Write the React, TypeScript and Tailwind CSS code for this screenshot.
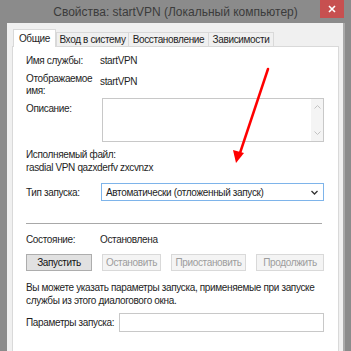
const Row = ({ label, children }: { label: string; children?: React.ReactNode }) => (
  <div className="flex items-center">
    <div className="w-[74px] shrink-0">{label}</div>
    {children}
  </div>
)

const Btn = ({ text, w, enabled }: { text: string; w: string; enabled?: boolean }) => (
  <div
    className={
      (enabled
        ? "border-[#adadad] bg-[#e1e1e1] text-[#111] "
        : "border-[#d9d9d9] bg-[#f4f4f4] text-[#9d9d9d] ") +
      w +
      " h-[17px] flex items-center justify-center border"
    }
  >
    {text}
  </div>
)

export default function App() {
  return (
    <div
      className="relative w-[351px] h-[351px] overflow-hidden bg-[#8b8b8b] flex flex-col text-[10px] tracking-[-0.35px] leading-[13px] text-[#1e1e1e] whitespace-nowrap"
      style={{ fontFamily: '"Liberation Sans", Arial, sans-serif' }}
    >
      {/* title bar */}
      <div className="h-[23px] shrink-0 grid grid-cols-[1fr_auto_1fr] items-start">
        <div />
        <div className="pt-[5px] text-[12px] tracking-normal leading-[15px] text-[#3b3b3b]">
          Свойства: startVPN (Локальный компьютер)
        </div>
        <div className="flex justify-end pr-[7px]">
          <div className="w-[24px] h-[18px] bg-[#c75050] flex items-center justify-center">
            <svg width="8" height="8" viewBox="0 0 8 8">
              <path d="M1 1L7 7M7 1L1 7" stroke="#fff" strokeWidth="1.6" />
            </svg>
          </div>
        </div>
      </div>

      {/* window body */}
      <div className="flex-1 ml-[7px] mr-[6px] border-r-2 border-[#a9a9a9] bg-[#f0f0f0] pl-[5px] pr-[4px] pt-[6px] flex flex-col">
        {/* tabs */}
        <div className="flex items-end h-[17px] pl-[1px]">
          <div className="relative z-10 h-[18px] w-[43px] -mb-px flex items-center justify-center bg-white border border-b-0 border-[#d9d9d9]">
            Общие
          </div>
          <div className="h-[14px] w-[73px] flex items-center justify-center border border-b-0 border-[#d9d9d9] bg-[#f0f0f0]">
            Вход в систему
          </div>
          <div className="h-[14px] w-[80px] flex items-center justify-center border border-b-0 border-l-0 border-[#d9d9d9] bg-[#f0f0f0]">
            Восстановление
          </div>
          <div className="h-[14px] w-[65px] flex items-center justify-center border border-b-0 border-l-0 border-[#d9d9d9] bg-[#f0f0f0]">
            Зависимости
          </div>
        </div>

        {/* panel */}
        <div className="flex-1 bg-white border border-b-0 border-[#d9d9d9] pl-[13px] pr-[14px] pt-[7px] flex flex-col">
          <Row label="Имя службы:">
            <span>startVPN</span>
          </Row>

          <div className="flex mt-[6px] leading-[12px]">
            <div className="w-[74px] shrink-0">
              Отображаемое
              <br />
              имя:
            </div>
            <div className="pt-[3px]">startVPN</div>
          </div>

          <div className="flex mt-[1px]">
            <div className="w-[76px] shrink-0 pt-[4px]">Описание:</div>
            <div className="flex-1 h-[44px] border border-[#c8c8c8] flex justify-end">
              <div className="w-[12px] bg-[#f4f4f4] flex flex-col items-center justify-between py-[6px]">
                <svg width="7" height="4" viewBox="0 0 7 4">
                  <path d="M0.5 3.5L3.5 0.5L6.5 3.5" stroke="#c2c2c2" fill="none" />
                </svg>
                <svg width="7" height="4" viewBox="0 0 7 4">
                  <path d="M0.5 0.5L3.5 3.5L6.5 0.5" stroke="#c2c2c2" fill="none" />
                </svg>
              </div>
            </div>
          </div>

          <div className="mt-[6px]">Исполняемый файл:</div>
          <div>rasdial VPN qazxderfv zxcvnzx</div>

          <div className="flex items-center mt-[9px]">
            <div className="w-[75px] shrink-0">Тип запуска:</div>
            <div className="flex-1 h-[18px] border border-[#7eb4ea] bg-white flex items-center justify-between pl-[4px] pr-[5px]">
              <span>Автоматически (отложенный запуск)</span>
              <svg width="7" height="5" viewBox="0 0 7 5">
                <path d="M0.5 1L3.5 4L6.5 1" stroke="#333" strokeWidth="1.3" fill="none" />
              </svg>
            </div>
          </div>

          <div className="mt-[22px] mr-[2px] border-t border-[#a8a8a8]" />

          <div className="mt-[9px]">
            <Row label="Состояние:">
              <span>Остановлена</span>
            </Row>
          </div>

          <div className="flex justify-between mt-[8px]">
            <Btn text="Запустить" w="w-[66px]" enabled />
            <Btn text="Остановить" w="w-[59px]" />
            <Btn text="Приостановить" w="w-[75px]" />
            <Btn text="Продолжить" w="w-[68px]" />
          </div>

          <p className="mt-[10px] whitespace-normal">
            Вы можете указать параметры запуска, применяемые при запуске службы из этого диалогового окна.
          </p>

          <div className="flex items-center mt-[6px]">
            <div className="w-[93px] shrink-0">Параметры запуска:</div>
            <div className="flex-1 h-[19px] border border-[#c8c8c8]" />
          </div>
        </div>
      </div>

      {/* red annotation arrow */}
      <svg className="absolute left-0 top-0 pointer-events-none" width="351" height="351" viewBox="0 0 351 351">
        <path d="M268 69L240 153" stroke="#f00" strokeWidth="2.5" strokeLinecap="round" />
        <path d="M236 163L233 150L244 153Z" fill="#f00" />
      </svg>
    </div>
  )
}
